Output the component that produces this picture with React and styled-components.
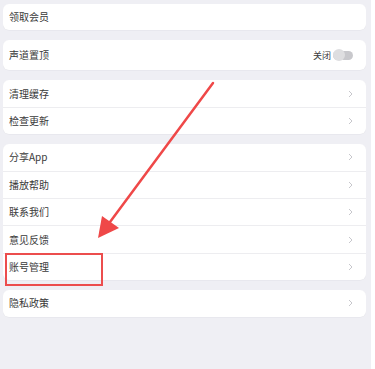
import React from "react";
import styled, { createGlobalStyle } from "styled-components";

const Global = createGlobalStyle`
    html, body {
        margin: 0;
        padding: 0;
        background: #ffffff;
    }
    body {
        font-family: "Noto Sans CJK SC", "Noto Sans", sans-serif;
    }
`;

const Page = styled.div`
    position: relative;
    width: 371px;
    height: 369px;
    box-sizing: border-box;
    padding: 4px 5px 0 3px;
    background: #efeff4;
    display: flex;
    flex-direction: column;
    gap: 10px;
`;

const Card = styled.div`
    background: #ffffff;
    border-radius: 6px;
    display: flex;
    flex-direction: column;
    box-shadow: 0 0.5px 0 #e2e2e7;
`;

const Row = styled.div`
    position: relative;
    height: ${({ $h }) => $h || 26.4}px;
    display: flex;
    align-items: center;
    padding: 0 13px 0 6px;
    font-size: 10px;
    color: #3a3a3a;
    border-top: ${({ $first }) => ($first ? "none" : "1px solid #ededf0")};

    .label {
        flex: 1;
        line-height: 1;
    }
`;

const Chevron = styled.svg`
    width: 5px;
    height: 8px;
`;

const ToggleWrap = styled.div`
    display: flex;
    align-items: center;
    gap: 2px;
    font-size: 9px;
    color: #3a3a3a;
`;

const Track = styled.div`
    width: 20px;
    height: 9px;
    border-radius: 5px;
    background: #c8c8cc;
    display: flex;
    align-items: center;

    &::before {
        content: "";
        width: 12px;
        height: 12px;
        border-radius: 50%;
        background: #dedee0;
    }
`;

const Highlight = styled.div`
    position: absolute;
    left: 2px;
    top: -1px;
    width: 98px;
    height: 33px;
    box-sizing: border-box;
    border: 2px solid #ec4d4d;
    pointer-events: none;
`;

const ArrowLayer = styled.svg`
    position: absolute;
    left: 0;
    top: 0;
    width: 371px;
    height: 369px;
    pointer-events: none;
`;

const groups = [
    [{ label: "领取会员", plain: true }],
    [{ label: "声道置顶", toggle: true, h: 30 }],
    [{ label: "清理缓存" }, { label: "检查更新" }],
    [
        { label: "分享App" },
        { label: "播放帮助" },
        { label: "联系我们" },
        { label: "意见反馈" },
        { label: "账号管理", marked: true },
    ],
    [{ label: "隐私政策" }],
];

const Arrow = () => (
    <Chevron viewBox="0 0 5 8">
        <path d="M1 1 L4 4 L1 7" fill="none" stroke="#c7c7cc" strokeWidth="1" />
    </Chevron>
);

const App = () => {
    return (
        <>
            <Global />
            <Page>
                {groups.map((rows, gi) => (
                    <Card key={gi}>
                        {rows.map((row, ri) => (
                            <Row key={row.label} $first={ri === 0} $h={row.h}>
                                <span className="label">{row.label}</span>
                                {row.toggle && (
                                    <ToggleWrap>
                                        <span>关闭</span>
                                        <Track />
                                    </ToggleWrap>
                                )}
                                {!row.toggle && !row.plain && <Arrow />}
                                {row.marked && <Highlight />}
                            </Row>
                        ))}
                    </Card>
                ))}
                <ArrowLayer viewBox="0 0 371 369">
                    <line
                        x1="213"
                        y1="83"
                        x2="110"
                        y2="222"
                        stroke="#ef4848"
                        strokeWidth="2.5"
                        strokeLinecap="round"
                    />
                    <polygon points="98,238 102,216 119,228" fill="#ef4848" />
                </ArrowLayer>
            </Page>
        </>
    );
};

export default App;
